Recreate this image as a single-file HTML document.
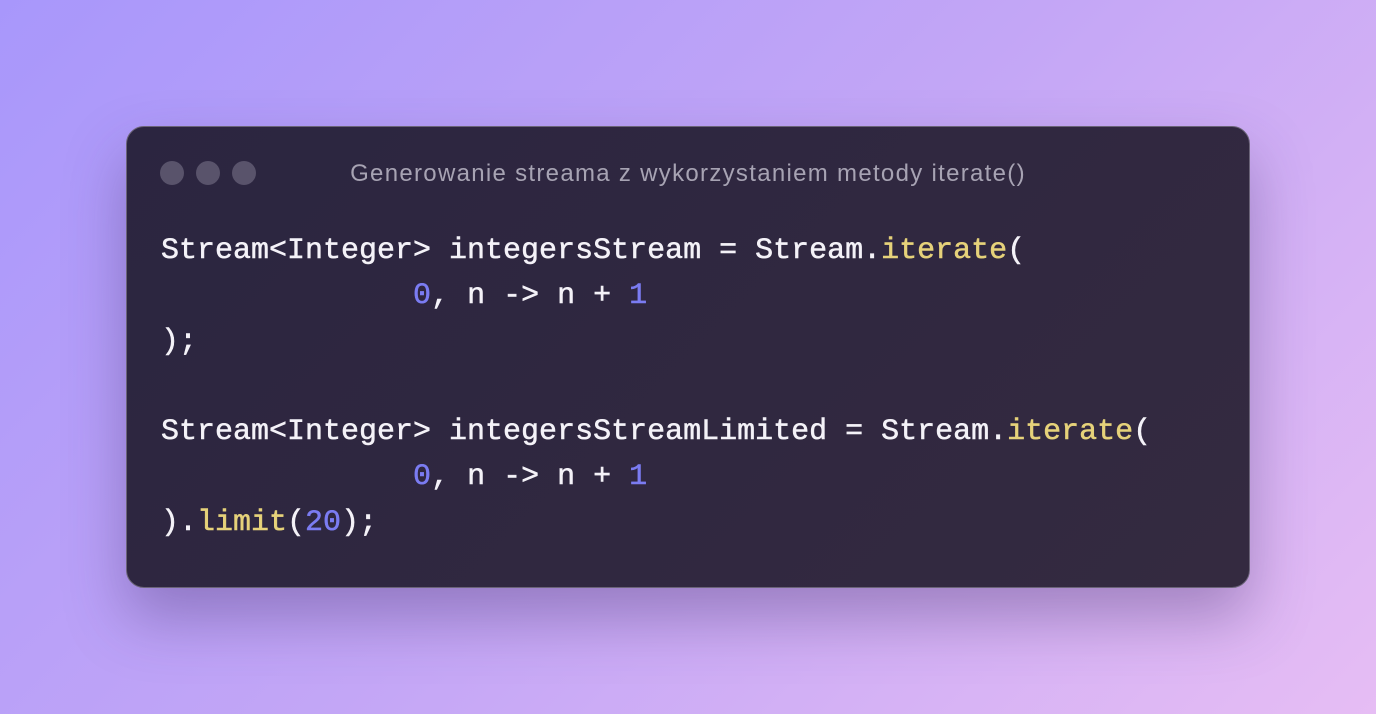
<!DOCTYPE html>
<html><head><style>
html,body{margin:0;padding:0;width:1376px;height:714px;overflow:hidden}
body{background:linear-gradient(135deg,#a897fb 0%,#c3a6f6 50%,#e6bdf4 100%);position:relative;font-family:"Liberation Sans",sans-serif}
.win{position:absolute;left:126px;top:126px;width:1122px;height:460px;border-radius:18px;background:linear-gradient(135deg,#2b2540,#342a40);border:1px solid #6b6478;box-shadow:0 30px 60px rgba(60,40,100,.35)}
.dot{position:absolute;top:34px;width:24px;height:24px;border-radius:50%;background:#59536b}
.title{position:absolute;left:0;right:0;top:33px;text-align:center;color:#a7a3b3;font-size:24px;letter-spacing:1.3px;padding-left:0}
pre{position:absolute;left:34px;top:102px;margin:0;font-family:"Liberation Mono",monospace;font-size:30px;line-height:45.3px;color:#f4f2f8;-webkit-text-stroke:0.5px currentColor}
.f{color:#e6d27a}.n{color:#7b7cf2}
</style></head><body>
<div class="win">
<div class="dot" style="left:33px"></div><div class="dot" style="left:69px"></div><div class="dot" style="left:105px"></div>
<div class="title">Generowanie streama z wykorzystaniem metody iterate()</div>
<pre>Stream&lt;Integer&gt; integersStream = Stream.<span class="f">iterate</span>(
              <span class="n">0</span>, n -&gt; n + <span class="n">1</span>
);

Stream&lt;Integer&gt; integersStreamLimited = Stream.<span class="f">iterate</span>(
              <span class="n">0</span>, n -&gt; n + <span class="n">1</span>
).<span class="f">limit</span>(<span class="n">20</span>);</pre>
</div>
</body></html>
